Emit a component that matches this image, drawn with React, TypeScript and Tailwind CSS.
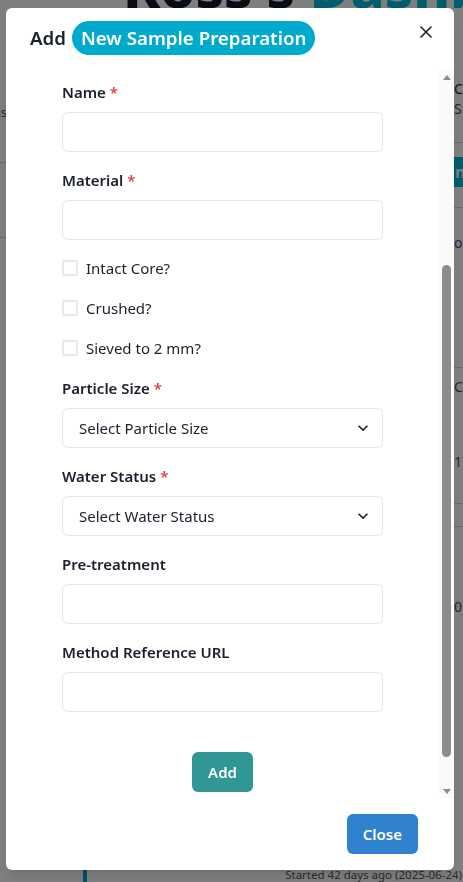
import React, { useLayoutEffect, useRef } from "react";

function Label({ text, required }: { text: string; required?: boolean }) {
  return (
    <label className="mb-2 block text-[15px] font-semibold leading-6 text-[#1a202c]">
      {text}
      {required && <span className="ml-1 text-[#e53e3e]">*</span>}
    </label>
  );
}

function TextField({ label, required }: { label: string; required?: boolean }) {
  return (
    <div>
      <Label text={label} required={required} />
      <input
        type="text"
        className="block h-10 w-full rounded-md border border-[#e2e8f0] bg-white px-4 text-[15px] outline-none"
      />
    </div>
  );
}

function SelectField({ label, placeholder }: { label: string; placeholder: string }) {
  return (
    <div>
      <Label text={label} required />
      <div className="flex h-10 w-full items-center justify-between rounded-md border border-[#e2e8f0] bg-white pl-4 pr-[9px] text-[15px] text-[#1a202c]">
        <span>{placeholder}</span>
        <svg width="20" height="20" viewBox="0 0 24 24" fill="#1a202c">
          <path d="M16.59 8.59L12 13.17 7.41 8.59 6 10l6 6 6-6z" />
        </svg>
      </div>
    </div>
  );
}

function Check({ label }: { label: string }) {
  return (
    <div className="flex h-6 items-center gap-2">
      <span className="block h-4 w-4 rounded-[2px] border-2 border-[#e2e8f0] bg-white" />
      <span className="text-[15px] leading-6 text-[#1a202c]">{label}</span>
    </div>
  );
}

function Background() {
  return (
    <div className="flex h-[882px] w-[463px] flex-col overflow-hidden bg-white">
      <div className="-mt-[42px] h-[56px] shrink-0 whitespace-nowrap pl-[123px] text-[56px] font-extrabold leading-none text-[#111827]">
        Ross's <span className="text-[#00bcd9]">Dashboard</span>
      </div>
      <div className="flex flex-1">
        <div className="-ml-[94px] w-[101px] shrink-0 pt-[89px] text-right text-[13px] leading-[18px] text-[#4a5568]">
          <div className="h-[59px]">Process</div>
          <div className="h-[75px] border-t border-[#d0d4da]" />
          <div className="border-t border-[#d0d4da]" />
        </div>
        <div className="flex-1" />
        <div className="w-[9px] shrink-0 overflow-hidden whitespace-nowrap pt-[65px] text-[14px]">
          <div className="leading-5 text-[#1a202c]">Current</div>
          <div className="h-[43px] leading-5 text-[#4a5568]">Sig</div>
          <div className="border-t border-[#d0d4da] pt-[14px]">
            <div className="h-[30px] bg-[#00bcd9] px-[1px] text-[16px] font-bold leading-[30px] text-white">
              nn
            </div>
          </div>
          <div className="mt-[20px] h-[160px] border-t border-[#d0d4da] pt-[24px] text-[#3b5b9a]">ol</div>
          <div className="h-[10px] border-t border-[#d0d4da]" />
          <div className="leading-5 text-[#4a5568]">Co</div>
          <div className="h-[130px] border-b border-[#d0d4da]" />
          <div className="mt-[-76px] h-[52px] text-[#4a5568]">1)</div>
          <div className="h-[103px] border-t border-[#d0d4da] pt-[92px] text-[#4a5568]">0)</div>
          <div className="h-[120px] border-t border-[#d0d4da]" />
        </div>
      </div>
      <div className="flex h-[14px] shrink-0 items-start">
        <div className="ml-[83px] h-full w-[4px] bg-[#00a3c4]" />
        <div className="ml-auto whitespace-nowrap pr-[1px] text-[11.5px] leading-[14px] text-[#4a5568]">
          Started 42 days ago (2025-06-24)
        </div>
      </div>
    </div>
  );
}

function Scrollbar() {
  return (
    <div className="flex w-[15px] shrink-0 flex-col bg-[#fafafa]">
      <div className="flex h-[14px] items-center justify-center">
        <svg width="8" height="5" viewBox="0 0 8 5">
          <polygon points="4,0 8,5 0,5" fill="#8c8c8c" />
        </svg>
      </div>
      <div className="flex-1 px-[3px]">
        <div className="mt-[181px] h-[492px] rounded-full bg-[#8c8c8c]" />
      </div>
      <div className="flex h-[14px] items-center justify-center">
        <svg width="8" height="5" viewBox="0 0 8 5">
          <polygon points="0,0 8,0 4,5" fill="#8c8c8c" />
        </svg>
      </div>
    </div>
  );
}

export default function App() {
  const scrollRef = useRef<HTMLDivElement>(null);
  const nameRef = useRef<HTMLDivElement>(null);

  useLayoutEffect(() => {
    const s = scrollRef.current;
    const n = nameRef.current;
    if (s && n) s.scrollTop = n.offsetTop - 10;
  }, []);

  return (
    <div className="relative h-[882px] w-[463px] overflow-hidden font-['Noto_Sans',sans-serif]">
      <Background />
      <div className="fixed inset-0 z-10 bg-black/50" />
      <section className="fixed left-[6px] top-[8px] z-20 flex h-[862px] w-[448px] flex-col rounded-md bg-white shadow-lg">
        <header className="flex items-center px-6 pb-[15px] pt-[13px] text-[18.7px] font-semibold text-[#1a202c]">
          <span>Add</span>
          <span className="ml-[6px] flex h-[34px] items-center rounded-full bg-[#00aacd] px-[9px] text-white">
            New Sample Preparation
          </span>
        </header>
        <button className="absolute right-3 top-2 flex h-8 w-8 items-center justify-center rounded-md">
          <svg width="12" height="12" viewBox="0 0 12 12" stroke="#1a202c" strokeWidth="1.6" strokeLinecap="round">
            <path d="M1 1L11 11M11 1L1 11" />
          </svg>
        </button>
        <div className="flex min-h-0 flex-1">
          <div ref={scrollRef} className="relative min-w-0 flex-1 overflow-hidden">
            <div className="px-6 pb-[48px] pt-2">
              <div className="flex flex-col gap-4 px-8">
                <TextField label="Sample ID" required />
                <TextField label="Date Prepared" />
                <TextField label="Prepared By" />
                <div ref={nameRef}>
                  <TextField label="Name" required />
                </div>
                <TextField label="Material" required />
                <Check label="Intact Core?" />
                <Check label="Crushed?" />
                <Check label="Sieved to 2 mm?" />
                <SelectField label="Particle Size" placeholder="Select Particle Size" />
                <SelectField label="Water Status" placeholder="Select Water Status" />
                <TextField label="Pre-treatment" />
                <TextField label="Method Reference URL" />
                <div className="mt-6 flex justify-center">
                  <button className="h-10 rounded-md bg-[#319795] px-4 text-[15px] font-semibold text-white">
                    Add
                  </button>
                </div>
              </div>
            </div>
          </div>
          <Scrollbar />
        </div>
        <footer className="flex justify-end px-6 py-4">
          <button className="mr-3 h-10 rounded-md bg-[#3182ce] px-4 text-[15px] font-semibold text-white">
            Close
          </button>
        </footer>
      </section>
    </div>
  );
}
